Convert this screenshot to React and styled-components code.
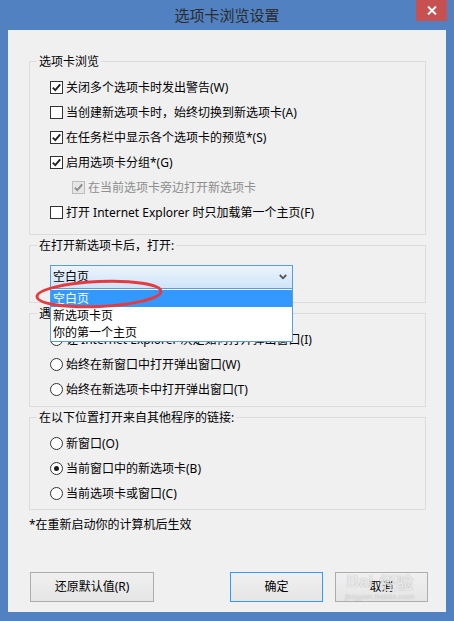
import React from "react";
import styled, { createGlobalStyle } from "styled-components";

const GlobalStyle = createGlobalStyle`
  html, body { margin: 0; padding: 0; }
  body {
    width: 454px;
    height: 621px;
    overflow: hidden;
    font-family: "Noto Sans", "Noto Sans CJK SC", sans-serif;
    font-size: 12px;
    color: #000;
  }
  * { box-sizing: border-box; }
`;

const Window = styled.div`
  width: 454px;
  height: 621px;
  background: #5181c0;
  display: flex;
  flex-direction: column;
  padding: 0 8px 9px;
`;

const TitleBar = styled.div`
  height: 30px;
  margin: 0 -8px;
  display: grid;
  grid-template-columns: 1fr auto 1fr;
`;

const Title = styled.div`
  grid-column: 2;
  align-self: center;
  font-family: "Noto Sans CJK SC", sans-serif;
  font-size: 15px;
  line-height: 30px;
  color: #2b2b2b;
`;

const CloseButton = styled.div`
  grid-column: 3;
  justify-self: end;
  align-self: start;
  margin-right: 7px;
  width: 31px;
  height: 21px;
  background: #c75050;
  display: flex;
  align-items: center;
  justify-content: center;
`;

const Client = styled.div`
  flex: 1;
  background: #f0f0f0;
  padding: 23px 20px 0 21px;
  display: flex;
  flex-direction: column;
`;

const Group = styled.fieldset`
  margin: 0 0 ${(p) => p.$gap || 0}px;
  padding: 0;
  min-width: 0;
  border: 1px solid #dcdcdc;
`;

const Legend = styled.legend`
  margin-left: 7px;
  padding: 0 2px;
  font-size: 12px;
  line-height: 17px;
  color: #000;
`;

const GroupBody = styled.div`
  padding: ${(p) => p.$top}px 0 ${(p) => p.$bottom}px 20px;
  position: relative;
`;

const Row = styled.div`
  height: 25px;
  display: flex;
  align-items: center;
  gap: 3px;
  padding-left: ${(p) => (p.$indent ? 22 : 0)}px;
  color: ${(p) => (p.$disabled ? "#8d8d8d" : "#000")};
  line-height: 16px;
  white-space: nowrap;
`;

const Box = styled.span`
  width: 13px;
  height: 13px;
  flex: none;
  border: 1px solid ${(p) => (p.$disabled ? "#bcbcbc" : "#333")};
  background: ${(p) => (p.$disabled ? "#e6e6e6" : "#fff")};
  display: flex;
  align-items: center;
  justify-content: center;
`;

const RadioCircle = styled.span`
  width: 13px;
  height: 13px;
  flex: none;
  border: 1px solid #333;
  border-radius: 50%;
  background: #fff;
  display: flex;
  align-items: center;
  justify-content: center;
`;

const RadioDot = styled.span`
  width: 5px;
  height: 5px;
  border-radius: 50%;
  background: #1a1a1a;
`;

const SelectWrap = styled.div`
  position: relative;
  width: 243px;
  margin-top: 11px;
`;

const Select = styled.div`
  height: 24px;
  border: 1px solid #569de5;
  background: linear-gradient(#ecf4fc, #cfe4f8);
  display: flex;
  align-items: center;
  justify-content: space-between;
  padding: 0 5px 0 2px;
  line-height: 16px;
`;

const List = styled.div`
  position: absolute;
  left: 0;
  right: 0;
  top: 24px;
  border: 1px solid #569de5;
  border-top: 0;
  padding-top: 1px;
  background: #fff;
  z-index: 5;
`;

const Item = styled.div`
  height: 17px;
  line-height: 17px;
  padding-left: 2px;
  background: ${(p) => (p.$active ? "#3399ff" : "transparent")};
  color: ${(p) => (p.$active ? "#fff" : "#000")};
`;

const Annotation = styled.svg`
  position: absolute;
  left: -18px;
  top: 12px;
  z-index: 6;
  pointer-events: none;
`;

const Note = styled.div`
  margin-top: 7px;
  line-height: 16px;
`;

const ButtonRow = styled.div`
  margin: auto -2px 10px 1px;
  display: flex;
  justify-content: space-between;
`;

const ButtonGroup = styled.div`
  display: flex;
  gap: 12px;
  position: relative;
`;

const Button = styled.div`
  width: ${(p) => p.$w}px;
  height: 30px;
  border: 1px solid ${(p) => (p.$default ? "#3399ff" : "#adadad")};
  background: linear-gradient(#f0f0f0, #e5e5e5);
  display: flex;
  align-items: center;
  justify-content: center;
  line-height: 16px;
`;

const Watermark = styled.div`
  position: absolute;
  right: 2px;
  top: -6px;
  width: 92px;
  display: flex;
  flex-direction: column;
  align-items: center;
  pointer-events: none;
  color: rgba(255, 255, 255, 0.75);
  text-shadow: 0 0 1px rgba(0, 0, 0, 0.35);
`;

const WmMain = styled.div`
  font-family: "Liberation Sans", sans-serif;
  font-weight: bold;
  font-size: 17px;
  line-height: 20px;
  display: flex;
  gap: 6px;
  margin-top: 6px;
`;

const WmCjk = styled.span`
  font-family: "Noto Sans CJK SC", sans-serif;
`;

const WmSub = styled.div`
  font-family: "Liberation Sans", sans-serif;
  font-size: 8px;
  line-height: 10px;
  letter-spacing: 0.3px;
`;

const Check = ({ disabled }) => (
  <svg width="11" height="11" viewBox="0 0 11 11">
    <path
      d="M1.8 5.6 L4.3 8.1 L9.2 2.3"
      fill="none"
      stroke={disabled ? "#8a8a8a" : "#222"}
      strokeWidth="1.9"
    />
  </svg>
);

const CheckRow = ({ checked, disabled, indent, children }) => (
  <Row $disabled={disabled} $indent={indent}>
    <Box $disabled={disabled}>{checked && <Check disabled={disabled} />}</Box>
    <span>{children}</span>
  </Row>
);

const RadioRow = ({ checked, children }) => (
  <Row>
    <RadioCircle>{checked && <RadioDot />}</RadioCircle>
    <span>{children}</span>
  </Row>
);

export default function App() {
  return (
    <>
      <GlobalStyle />
      <Window>
        <TitleBar>
          <Title>选项卡浏览设置</Title>
          <CloseButton>
            <svg width="10" height="9" viewBox="0 0 10 9">
              <path d="M1 0.5 L9 8.5 M9 0.5 L1 8.5" stroke="#fff" strokeWidth="2" />
            </svg>
          </CloseButton>
        </TitleBar>
        <Client>
          <Group $gap={2}>
            <Legend>选项卡浏览</Legend>
            <GroupBody $top={5} $bottom={9}>
              <CheckRow checked>关闭多个选项卡时发出警告(W)</CheckRow>
              <CheckRow>当创建新选项卡时，始终切换到新选项卡(A)</CheckRow>
              <CheckRow checked>在任务栏中显示各个选项卡的预览*(S)</CheckRow>
              <CheckRow checked>启用选项卡分组*(G)</CheckRow>
              <CheckRow checked disabled indent>
                在当前选项卡旁边打开新选项卡
              </CheckRow>
              <CheckRow>打开 Internet Explorer 时只加载第一个主页(F)</CheckRow>
            </GroupBody>
          </Group>
          <Group $gap={2}>
            <Legend>在打开新选项卡后，打开:</Legend>
            <GroupBody $top={0} $bottom={13}>
              <SelectWrap>
                <Select>
                  <span>空白页</span>
                  <svg width="8" height="6" viewBox="0 0 8 6">
                    <path d="M0.8 1 L4 4.3 L7.2 1" fill="none" stroke="#555" strokeWidth="1.8" />
                  </svg>
                </Select>
                <List>
                  <Item $active>空白页</Item>
                  <Item>新选项卡页</Item>
                  <Item>你的第一个主页</Item>
                </List>
                <Annotation width="136" height="34" viewBox="0 0 136 34">
                  <ellipse
                    cx="67"
                    cy="17"
                    rx="62"
                    ry="12.5"
                    fill="none"
                    stroke="#e53b3f"
                    strokeWidth="3"
                    transform="rotate(-2.5 67 17)"
                  />
                </Annotation>
              </SelectWrap>
            </GroupBody>
          </Group>
          <Group $gap={2}>
            <Legend>遇到弹出窗口时:</Legend>
            <GroupBody $top={5} $bottom={4}>
              <RadioRow>让 Internet Explorer 决定如何打开弹出窗口(I)</RadioRow>
              <RadioRow>始终在新窗口中打开弹出窗口(W)</RadioRow>
              <RadioRow>始终在新选项卡中打开弹出窗口(T)</RadioRow>
            </GroupBody>
          </Group>
          <Group>
            <Legend>在以下位置打开来自其他程序的链接:</Legend>
            <GroupBody $top={5} $bottom={3}>
              <RadioRow>新窗口(O)</RadioRow>
              <RadioRow checked>当前窗口中的新选项卡(B)</RadioRow>
              <RadioRow>当前选项卡或窗口(C)</RadioRow>
            </GroupBody>
          </Group>
          <Note>*在重新启动你的计算机后生效</Note>
          <ButtonRow>
            <Button $w={124}>还原默认值(R)</Button>
            <ButtonGroup>
              <Button $w={93} $default>确定</Button>
              <Button $w={93}>取消</Button>
              <Watermark>
                <WmMain>
                  <span>Bai</span>
                  <WmCjk>经验</WmCjk>
                </WmMain>
                <WmSub>jingyan.baidu.com</WmSub>
              </Watermark>
            </ButtonGroup>
          </ButtonRow>
        </Client>
      </Window>
    </>
  );
}
